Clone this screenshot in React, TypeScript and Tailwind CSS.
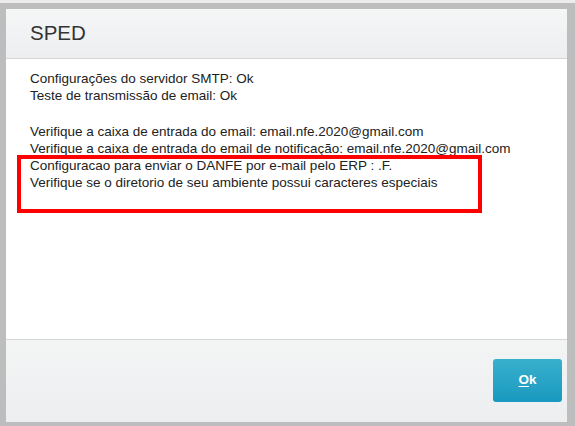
import React from 'react';

const App: React.FC = () => {
  const lines = [
    'Configurações do servidor SMTP: Ok',
    'Teste de transmissão de email: Ok',
  ];
  const lines2 = [
    'Verifique a caixa de entrada do email: email.nfe.2020@gmail.com',
    'Verifique a caixa de entrada do email de notificação: email.nfe.2020@gmail.com',
    'Configuracao para enviar o DANFE por e-mail pelo ERP : .F.',
    'Verifique se o diretorio de seu ambiente possui caracteres especiais',
  ];

  return (
    <div
      className="w-[575px] h-[426px] bg-[#ececec] pt-[3px] overflow-hidden"
      style={{ fontFamily: '"Liberation Sans", Arial, sans-serif' }}
    >
      <div className="h-[423px] w-[575px] border-[#bdbdbd] border-t-[6px] border-l-[6px] border-r-[8px] border-b-[4px] flex flex-col">
        <div className="h-[50px] shrink-0 flex items-center pl-[24px] border-b border-[#d6d6d6] bg-gradient-to-b from-[#f5f6f6] to-[#edeef0]">
          <span className="text-[20.5px] text-[#333]">SPED</span>
        </div>

        <div className="relative h-[280px] shrink-0 bg-white pl-[24px] pt-[11px] text-[13.5px] leading-[17px] text-[#222]">
          {lines.map((l, i) => (
            <div key={i}>{l}</div>
          ))}
          <div className="h-[19px]" />
          {lines2.map((l, i) => (
            <div key={i}>{l}</div>
          ))}
          <div className="absolute left-[11px] top-[96px] w-[465px] h-[58px] border-[4px] border-[#f00]" />
        </div>

        <div className="flex-1 border-t border-[#d6d6d6] bg-gradient-to-b from-[#f3f4f4] to-[#edeef0] flex justify-end items-start pt-[19px] pr-[5px]">
          <button className="w-[69px] h-[43px] rounded-[3px] bg-gradient-to-b from-[#38b0cd] to-[#1799bf] text-white text-[13.5px] font-bold">
            <span className="underline underline-offset-2">O</span>k
          </button>
        </div>
      </div>
    </div>
  );
};

export default App;
